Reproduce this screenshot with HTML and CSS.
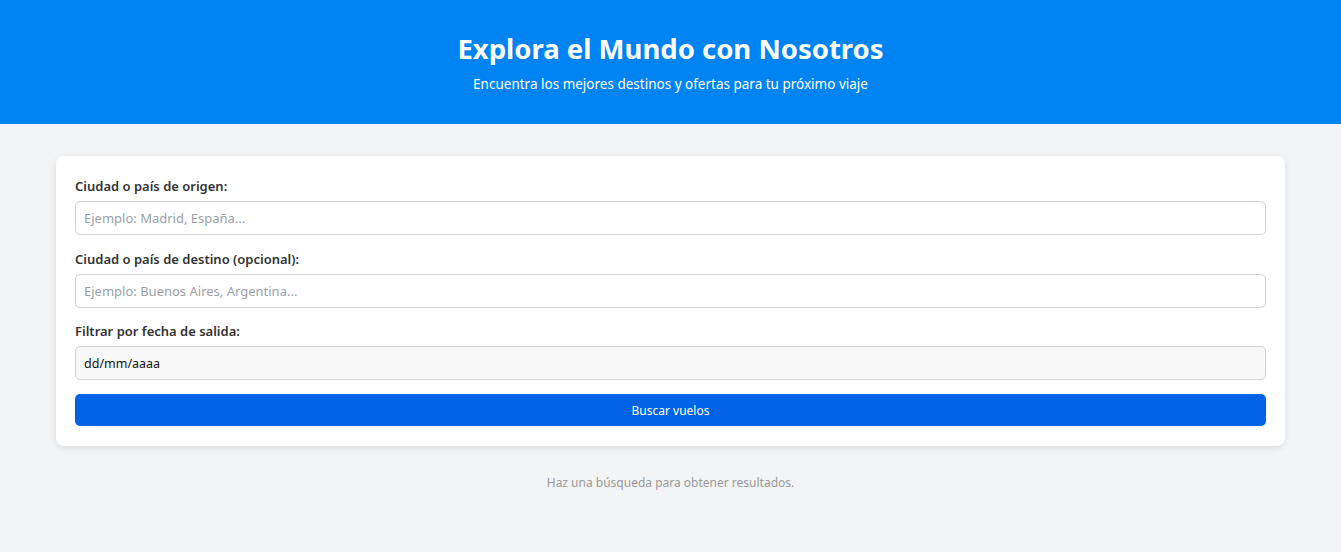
FILE: index.html
```html
<!DOCTYPE html>
<html lang="es">
<head>
<meta charset="utf-8">
<title>Explora el Mundo con Nosotros</title>
<link rel="stylesheet" href="styles.css">
</head>
<body>
<header class="hero">
  <h1 class="hero-title">Explora el Mundo con Nosotros</h1>
  <p class="hero-sub">Encuentra los mejores destinos y ofertas para tu próximo viaje</p>
</header>
<main class="main">
  <form class="card">
    <label class="label" for="origen">Ciudad o país de origen:</label>
    <input class="field" id="origen" type="text" placeholder="Ejemplo: Madrid, España...">
    <label class="label" for="destino">Ciudad o país de destino (opcional):</label>
    <input class="field" id="destino" type="text" placeholder="Ejemplo: Buenos Aires, Argentina...">
    <label class="label" for="fecha">Filtrar por fecha de salida:</label>
    <div class="field field-date" id="fecha">dd/mm/aaaa</div>
    <button class="btn" type="button">Buscar vuelos</button>
  </form>
  <p class="empty">Haz una búsqueda para obtener resultados.</p>
</main>
</body>
</html>
```
FILE: styles.css
```css
* { box-sizing: border-box; }
html, body { margin: 0; padding: 0; }
body {
  font-family: "Noto Sans", "Open Sans", sans-serif;
  background: #f3f4f6;
  color: #333;
  height: 552px;
  overflow: hidden;
}
.hero {
  background: #0084f4;
  color: #fff;
  text-align: center;
  height: 124px;
  padding-top: 31px;
}
.hero-title {
  margin: 0;
  font-size: 27.5px;
  font-weight: 700;
  line-height: 36px;
}
.hero-sub {
  margin: 8px 0 0;
  font-size: 13.5px;
  line-height: 18px;
}
.main {
  padding: 32px 56px 0;
}
.card {
  background: #fff;
  border-radius: 8px;
  box-shadow: 0 2px 6px rgba(0,0,0,0.1);
  padding: 20px 19px 20px;
  display: flex;
  flex-direction: column;
}
.label {
  font-size: 13px;
  font-weight: 600;
  color: #333;
  line-height: 20px;
  margin-bottom: 5px;
}
.field {
  height: 34px;
  border: 1px solid #cfd3da;
  border-radius: 5px;
  padding: 0 8px;
  font-family: inherit;
  font-size: 13px;
  color: #222;
  margin-bottom: 13.5px;
  outline: none;
  background: #fff;
}
.field::placeholder { color: #9aa0aa; }
.field-date {
  background: #f8f8f8;
  display: flex;
  align-items: center;
  color: #111;
  font-size: 12.5px;
  margin-bottom: 14px;
}
.btn {
  height: 32px;
  border: none;
  border-radius: 5px;
  background: #0063e6;
  color: #fff;
  font-family: inherit;
  font-size: 12px;
}
.empty {
  text-align: center;
  color: #999;
  font-size: 12px;
  margin: 28px 0 0;
}
```
